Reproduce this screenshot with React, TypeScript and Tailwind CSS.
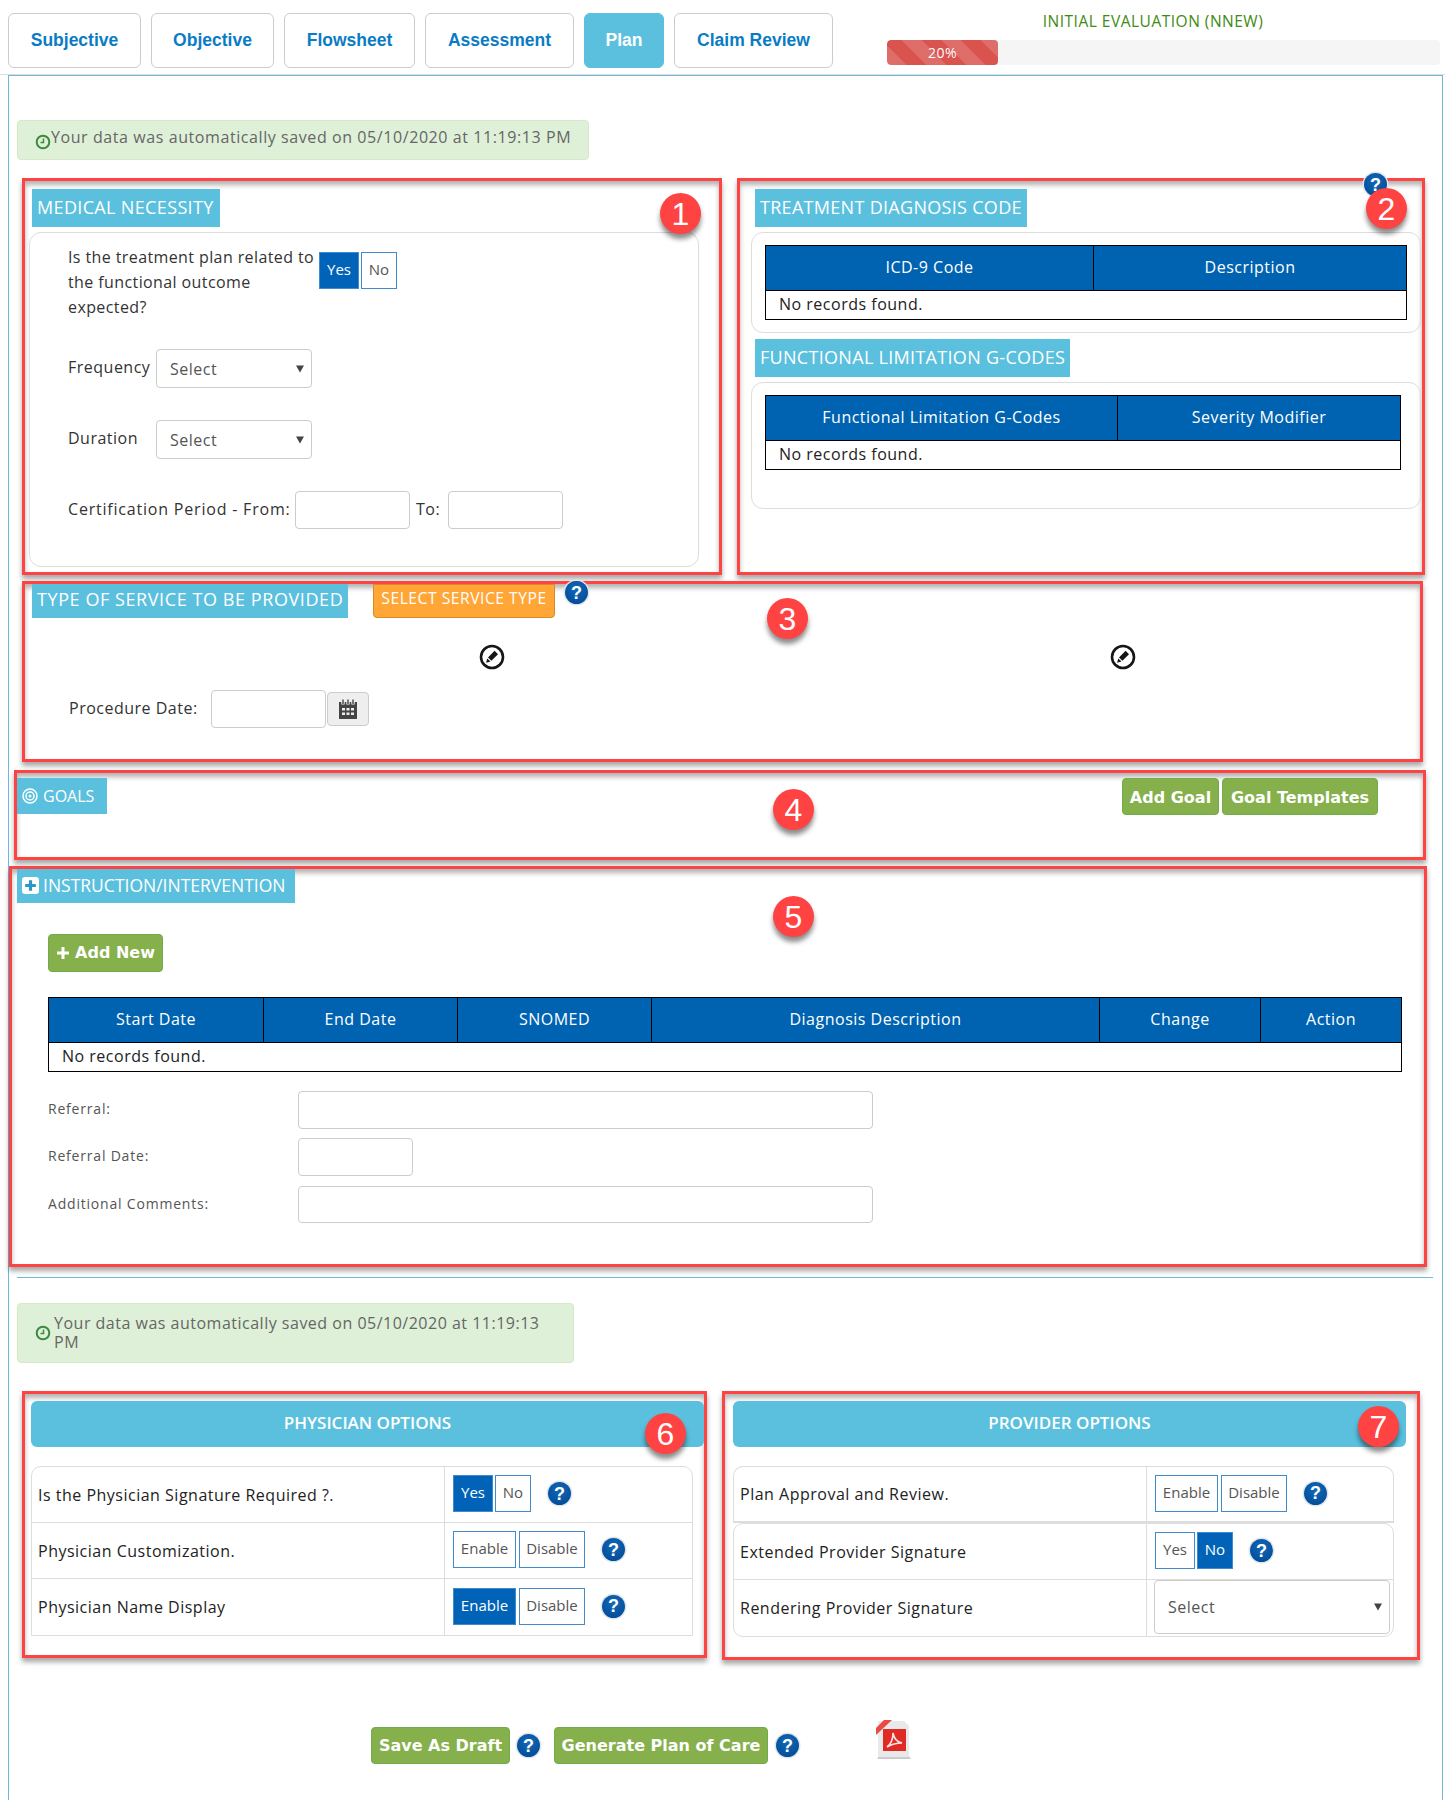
import React from "react";

const Help = ({ className = "" }: { className?: string }) => (
  <span className={`inline-flex h-[23px] w-[23px] shrink-0 items-center justify-center rounded-full bg-[radial-gradient(circle_at_50%_35%,#1268b8,#00468f)] text-[18px] leading-none font-bold tracking-normal text-white shadow-[0_0_0_1.5px_#dfe6ee] font-['Liberation_Sans'] ${className}`}>?</span>
);

const Badge = ({ n, className }: { n: number; className: string }) => (
  <span className={`absolute flex h-[41px] w-[41px] items-center justify-center rounded-full bg-[#ff4343] text-[32px] leading-none tracking-normal text-white shadow-[0_5px_5px_rgba(0,0,0,0.45)] font-['Liberation_Sans'] ${className}`}>{n}</span>
);

const Box = ({ className, children }: { className: string; children?: React.ReactNode }) => (
  <div className={`relative shrink-0 border-[3px] border-[#ff4343] shadow-[0_4px_5px_rgba(0,0,0,0.35),inset_0_4px_5px_rgba(0,0,0,0.3)] ${className}`}>{children}</div>
);

const Heading = ({ className = "", children }: { className?: string; children: React.ReactNode }) => (
  <div className={`flex items-center bg-[#5bc0de] px-[5px] whitespace-nowrap text-white ${className}`}>{children}</div>
);

const Toggle = ({ label, on, w }: { label: string; on?: boolean; w: string }) => (
  <span className={`flex h-[37px] items-center justify-center border border-[#428bca] pb-[2px] text-[15px] tracking-normal ${w} ${on ? "bg-[#0063b8] text-white" : "bg-white text-[#555]"}`}>{label}</span>
);

const SelectBox = ({ className }: { className: string }) => (
  <div className={`relative ${className}`}>
    <select className="h-full w-full appearance-none rounded-[4px] border border-[#ccc] bg-white pl-[13px] text-[16px] text-[#555] outline-none">
      <option>Select</option>
    </select>
    <span className="absolute top-1/2 right-[8px] h-0 w-0 -translate-y-1/2 border-x-[4px] border-t-[7px] border-x-transparent border-t-[#444]" />
  </div>
);

const TextInput = ({ className }: { className: string }) => (
  <input className={`rounded-[4px] border border-[#ccc] bg-white outline-none ${className}`} />
);

const Clock = () => (
  <svg width="16" height="16" viewBox="0 0 16 16" className="shrink-0">
    <circle cx="8" cy="8" r="6.3" fill="none" stroke="#3c8a3e" strokeWidth="2" />
    <path d="M8.5 4.5V8.6H5.5" fill="none" stroke="#3c8a3e" strokeWidth="1.5" />
  </svg>
);

const EditIcon = () => (
  <svg width="26" height="26" viewBox="0 0 26 26">
    <circle cx="13" cy="13" r="11" fill="#fff" stroke="#161616" strokeWidth="2.6" />
    <path d="M15.6 6.8l3.4 3.4-6.6 6.6-3.4-3.4zM8.3 14.4l3.2 3.2-4.4 1.2z" fill="#161616" />
  </svg>
);

const CalendarIcon = () => (
  <svg width="20" height="20" viewBox="0 0 20 20">
    <path d="M1 3h18v17H1z" fill="#444" />
    <path d="M5 0.5v5M10 0.5v5M15 0.5v5" stroke="#f0f0f0" strokeWidth="3.4" />
    <path d="M5 0.5v4.5M10 0.5v4.5M15 0.5v4.5" stroke="#444" strokeWidth="1.4" />
    <path d="M4 9h3v2.5H4zM8.5 9h3v2.5h-3zM13 9h3v2.5h-3zM4 13.5h3V16H4zM8.5 13.5h3V16h-3zM13 13.5h3V16h-3z" fill="#eee" />
  </svg>
);

const PdfIcon = () => (
  <svg width="36" height="40" viewBox="0 0 36 40">
    <path d="M2 39h34l-2-3H4z" fill="#ccc" />
    <path d="M3 1h26l5 5v31H3z" fill="#e9e9ec" />
    <path d="M8 9h23v22H8z" fill="#df2a26" />
    <path d="M12 27c4-3 6-9 6-14 1 6 4 9 9 10-5 0-10 1-15 4z" fill="none" stroke="#fbe3e0" strokeWidth="1.6" />
    <path d="M1 8L9 0h8L1 15z" fill="#ea4a42" />
  </svg>
);

const GreenButton = ({ className, children }: { className: string; children: React.ReactNode }) => (
  <span className={`flex items-center justify-center rounded-[4px] border border-[#6fad4b] bg-[#85b04b] text-[16px] font-bold tracking-normal text-white font-['DejaVu_Sans'] ${className}`}>{children}</span>
);

const TH = "border border-black bg-[#0063b1] pb-[2px] font-normal text-white text-[16px]";

const HeaderTable = ({ cols, className }: { cols: [string, string][]; className: string }) => (
  <table className={`table-fixed border-collapse text-[16px] ${className}`}>
    <thead>
      <tr className="h-[45px]">
        {cols.map(([c, w]) => (
          <th key={c} className={`${TH} ${w}`}>{c}</th>
        ))}
      </tr>
    </thead>
    <tbody>
      <tr className="h-[29px]">
        <td colSpan={cols.length} className="border border-black pb-[2px] pl-[13px] text-[#222]">No records found.</td>
      </tr>
    </tbody>
  </table>
);

const Row = ({ label, children, last, h }: { label: string; children: React.ReactNode; last?: boolean; h: string }) => (
  <div className={`flex ${h} ${last ? "" : "border-b border-[#ddd]"}`}>
    <div className="flex w-[413px] shrink-0 items-center border-r border-[#ddd] pl-[6px] text-[16px] text-[#222]">{label}</div>
    <div className="flex flex-1 items-center pb-[2px] pl-[8px]">{children}</div>
  </div>
);

export default function App() {
  const tabs = [
    ["Subjective", "w-[133px]"],
    ["Objective", "w-[123px]"],
    ["Flowsheet", "w-[131px]"],
    ["Assessment", "w-[149px]"],
    ["Plan", "w-[80px]"],
    ["Claim Review", "w-[159px]"],
  ];
  return (
    <div className="h-[1800px] w-[1445px] overflow-hidden bg-white font-['Open_Sans',sans-serif] tracking-[0.5px] text-[#333]">
      <div className="flex h-[75px] border-b border-[#ddd] pt-[13px] pl-[8px]">
        <div className="flex h-[55px] gap-[10px]">
          {tabs.map(([t, w]) => (
            <span key={t} className={`flex items-center justify-center rounded-[6px] border font-['Liberation_Sans'] text-[17.5px] font-bold tracking-normal ${w} ${t === "Plan" ? "border-[#5bc0de] bg-[#5bc0de] text-white" : "border-[#ccc] bg-white text-[#0a7cc4]"}`}>{t}</span>
          ))}
        </div>
        <div className="ml-[54px] flex w-[553px] flex-col">
          <div className="-mt-[4px] h-[31px] pr-[21px] text-center text-[15.5px] leading-[24px] text-[#3f8a12]">INITIAL EVALUATION (NNEW)</div>
          <div className="h-[25px] overflow-hidden rounded-[4px] bg-[#f5f5f5]">
            <div className="flex h-full w-[111px] items-center justify-center rounded-[4px] bg-[#d9534f] bg-[repeating-linear-gradient(45deg,rgba(255,255,255,0.15)_0_14px,transparent_14px_28px)] text-[14px] text-white">20%</div>
          </div>
        </div>
      </div>

      <div className="ml-[8px] h-[1725px] w-[1435px] border-x border-t border-[#6db9dc]">
        <div className="mt-[44px] ml-[8px] flex h-[40px] w-[572px] items-center rounded-[4px] border border-[#d6e9c6] bg-[#dff0d8] pl-[17px] text-[16px] tracking-[0.58px] whitespace-nowrap text-[#666]">
          <span className="mt-[4px]"><Clock /></span>
          <span className="-translate-y-[3px]">Your data was automatically saved on 05/10/2020 at 11:19:13 PM</span>
        </div>

        <div className="mt-[18px] flex">
          <Box className="ml-[13px] h-[397px] w-[700px] pt-[8px] pl-[7px]">
            <Heading className="h-[38px] w-[188px] pb-[2px] text-[18px] tracking-[0.35px]">MEDICAL NECESSITY</Heading>
            <div className="mt-[5px] -ml-[3px] h-[335px] w-[670px] rounded-[12px] border border-[#ddd] pt-[12px] pl-[38px] text-[16px] text-[#333]">
              <div className="flex">
                <div className="w-[250px] leading-[25px] tracking-[0.4px]">Is the treatment plan related to the functional outcome expected?</div>
                <div className="mt-[7px] ml-[1px] flex gap-[2px]">
                  <Toggle label="Yes" on w="w-[40px]" />
                  <Toggle label="No" w="w-[36px]" />
                </div>
              </div>
              <div className="mt-[29px] flex h-[39px] items-center">
                <span className="w-[88px] -translate-y-[2px]">Frequency</span>
                <SelectBox className="h-[39px] w-[156px]" />
              </div>
              <div className="mt-[32px] flex h-[39px] items-center">
                <span className="w-[88px] -translate-y-[2px]">Duration</span>
                <SelectBox className="h-[39px] w-[156px]" />
              </div>
              <div className="mt-[32px] flex h-[38px] items-center">
                <span className="w-[227px] -translate-y-[1px] tracking-[0.8px] whitespace-nowrap">Certification Period - From:</span>
                <TextInput className="h-[38px] w-[115px]" />
                <span className="ml-[6px] w-[32px] -translate-y-[1px]">To:</span>
                <TextInput className="h-[38px] w-[115px]" />
              </div>
            </div>
            <Badge n={1} className="top-[12px] left-[635px]" />
          </Box>

          <Box className="ml-[15px] h-[397px] w-[688px] pt-[8px] pl-[15px]">
            <Help className="absolute -top-[8px] left-[624px]" />
            <Heading className="h-[38px] w-[272px] pb-[2px] text-[18px] tracking-[0.3px]">TREATMENT DIAGNOSIS CODE</Heading>
            <div className="mt-[5px] -ml-[4px] h-[101px] w-[670px] rounded-[12px] border border-[#ddd] pt-[12px] pl-[13px]">
              <HeaderTable className="w-[642px]" cols={[["ICD-9 Code", "w-[328px]"], ["Description", ""]]} />
            </div>
            <Heading className="mt-[6px] h-[38px] w-[315px] pb-[2px] text-[18px] tracking-[0.3px]">FUNCTIONAL LIMITATION G-CODES</Heading>
            <div className="mt-[5px] -ml-[4px] h-[127px] w-[670px] rounded-[12px] border border-[#ddd] pt-[12px] pl-[13px]">
              <HeaderTable className="w-[636px]" cols={[["Functional Limitation G-Codes", "w-[352px]"], ["Severity Modifier", ""]]} />
            </div>
            <Badge n={2} className="top-[7px] left-[626px]" />
          </Box>
        </div>

        <Box className="mt-[6px] ml-[13px] h-[181px] w-[1401px] pl-[7px]">
          <div className="flex items-start">
            <Heading className="h-[34px] w-[316px] pb-[4px] text-[18px] tracking-[0.58px]">TYPE OF SERVICE TO BE PROVIDED</Heading>
            <span className="ml-[25px] flex h-[34px] w-[182px] items-center justify-center rounded-b-[4px] border border-[#d98b20] bg-[#ffa636] pb-[5px] text-[15.7px] whitespace-nowrap text-white">SELECT SERVICE TYPE</span>
            <Help className="mt-[-3px] ml-[10px]" />
          </div>
          <div className="mt-[26px] ml-[447px] flex h-[26px] w-[657px] justify-between">
            <EditIcon />
            <EditIcon />
          </div>
          <div className="mt-[20px] ml-[37px] flex items-center">
            <span className="w-[142px] -translate-y-[1px] text-[16px]">Procedure Date:</span>
            <TextInput className="h-[38px] w-[115px]" />
            <span className="ml-[1px] flex h-[34px] w-[42px] items-center justify-center rounded-[4px] border border-[#ccc] bg-[#eee]"><CalendarIcon /></span>
          </div>
          <Badge n={3} className="top-[14px] left-[742px]" />
        </Box>

        <Box className="mt-[8px] ml-[5px] h-[90px] w-[1412px]">
          <div className="flex items-start pt-[5px]">
            <Heading className="h-[36px] w-[90px] gap-[5px] text-[16px] tracking-normal">
              <svg width="16" height="16" viewBox="0 0 16 16" className="shrink-0"><circle cx="8" cy="8" r="7" fill="none" stroke="#fff" strokeWidth="1.5" /><circle cx="8" cy="8" r="4" fill="none" stroke="#fff" strokeWidth="1.5" /><circle cx="8" cy="8" r="1.5" fill="#fff" /></svg>
              GOALS
            </Heading>
            <GreenButton className="ml-[1015px] h-[37px] w-[97px] pt-[2px]">Add Goal</GreenButton>
            <GreenButton className="ml-[3px] h-[37px] w-[156px] pt-[2px]">Goal Templates</GreenButton>
          </div>
          <Badge n={4} className="top-[16px] left-[756px]" />
        </Box>

        <Box className="mt-[6px] h-[401px] w-[1418px] pl-[5px]">
          <Heading className="h-[34px] w-[278px] gap-[4px] pb-[2px] text-[17.5px] tracking-normal">
            <svg width="17" height="17" viewBox="0 0 16 16" className="shrink-0"><rect width="16" height="16" rx="3" fill="#fff" /><path d="M8 3v10M3 8h10" stroke="#2f95c4" strokeWidth="3" /></svg>
            INSTRUCTION/INTERVENTION
          </Heading>
          <div className="pl-[31px]">
            <GreenButton className="mt-[31px] h-[38px] w-[115px] gap-[5px]">
              <svg width="14" height="14" viewBox="0 0 14 14" className="shrink-0"><path d="M7 1v12M1 7h12" stroke="#fff" strokeWidth="3" /></svg>
              Add New
            </GreenButton>
            <table className="mt-[25px] w-[1354px] table-fixed border-collapse text-[16px]">
              <thead>
                <tr className="h-[45px]">
                  {[["Start Date", "w-[215px]"], ["End Date", "w-[194px]"], ["SNOMED", "w-[194px]"], ["Diagnosis Description", "w-[448px]"], ["Change", "w-[161px]"], ["Action", ""]].map(([c, w]) => (
                    <th key={c} className={`${TH} ${w}`}>{c}</th>
                  ))}
                </tr>
              </thead>
              <tbody>
                <tr className="h-[29px]">
                  <td colSpan={6} className="border border-black pb-[2px] pl-[13px] text-[#222]">No records found.</td>
                </tr>
              </tbody>
            </table>
            <div className="mt-[19px] flex h-[38px] items-center text-[14px] tracking-[0.8px] text-[#555]">
              <span className="w-[250px] -translate-y-[2px]">Referral:</span>
              <TextInput className="h-[38px] w-[575px]" />
            </div>
            <div className="mt-[9px] flex h-[38px] items-center text-[14px] tracking-[0.8px] text-[#555]">
              <span className="w-[250px] -translate-y-[2px]">Referral Date:</span>
              <TextInput className="h-[38px] w-[115px]" />
            </div>
            <div className="mt-[10px] flex h-[37px] items-center text-[14px] tracking-[0.8px] text-[#555]">
              <span className="w-[250px] -translate-y-[1px]">Additional Comments:</span>
              <TextInput className="h-[37px] w-[575px]" />
            </div>
          </div>
          <Badge n={5} className="top-[27px] left-[761px]" />
        </Box>

        <div className="mt-[10px] ml-[8px] h-px w-[1416px] bg-[#6db9dc]" />

        <div className="mt-[25px] ml-[8px] flex h-[60px] w-[557px] items-center rounded-[4px] border border-[#d6e9c6] bg-[#dff0d8] pr-[20px] pl-[17px] text-[16px] leading-[19px] text-[#666]">
          <Clock />
          <span className="ml-[3px] w-[500px]">Your data was automatically saved on 05/10/2020 at 11:19:13 PM</span>
        </div>

        <div className="mt-[28px] flex items-start">
          <Box className="ml-[13px] h-[267px] w-[685px] pt-[7px] pl-[6px]">
            <div className="flex h-[46px] w-[673px] items-center justify-center rounded-[6px] bg-[#5bc0de] pb-[2px] text-[17px] font-semibold tracking-normal text-white">PHYSICIAN OPTIONS</div>
            <div className="mt-[19px] w-[662px] overflow-hidden rounded-t-[10px] border border-[#ddd]">
              <Row label="Is the Physician Signature Required ?." h="h-[56px]">
                <Toggle label="Yes" on w="w-[40px]" />
                <span className="ml-[2px]" /><Toggle label="No" w="w-[36px]" />
                <Help className="ml-[17px]" />
              </Row>
              <Row label="Physician Customization." h="h-[56px]">
                <Toggle label="Enable" w="w-[63px]" />
                <span className="ml-[3px]" /><Toggle label="Disable" w="w-[66px]" />
                <Help className="ml-[17px]" />
              </Row>
              <Row label="Physician Name Display" h="h-[56px]" last>
                <Toggle label="Enable" on w="w-[63px]" />
                <span className="ml-[3px]" /><Toggle label="Disable" w="w-[66px]" />
                <Help className="ml-[17px]" />
              </Row>
            </div>
            <Badge n={6} className="top-[19px] left-[620px]" />
          </Box>

          <Box className="ml-[15px] h-[269px] w-[698px] pt-[7px] pl-[8px]">
            <div className="flex h-[46px] w-[673px] items-center justify-center rounded-[6px] bg-[#5bc0de] pb-[2px] text-[17px] font-semibold tracking-normal text-white">PROVIDER OPTIONS</div>
            <div className="mt-[19px] w-[661px] overflow-hidden rounded-t-[10px] border border-[#ddd] border-b-2">
              <Row label="Plan Approval and Review." h="h-[54px]" last>
                <Toggle label="Enable" w="w-[63px]" />
                <span className="ml-[3px]" /><Toggle label="Disable" w="w-[66px]" />
                <Help className="ml-[17px]" />
              </Row>
            </div>
            <div className="w-[661px] overflow-hidden rounded-[10px] border border-[#ddd]">
              <Row label="Extended Provider Signature" h="h-[56px]">
                <Toggle label="Yes" w="w-[40px]" />
                <span className="ml-[2px]" /><Toggle label="No" on w="w-[36px]" />
                <Help className="ml-[17px]" />
              </Row>
              <Row label="Rendering Provider Signature" h="h-[56px]" last>
                <SelectBox className="-ml-[1px] h-[54px] w-[236px]" />
              </Row>
            </div>
            <Badge n={7} className="top-[12px] left-[633px]" />
          </Box>
        </div>

        <div className="mt-[67px] ml-[362px] flex items-center">
          <GreenButton className="h-[37px] w-[139px]">Save As Draft</GreenButton>
          <Help className="ml-[7px]" />
          <GreenButton className="ml-[14px] h-[37px] w-[214px]">Generate Plan of Care</GreenButton>
          <Help className="ml-[8px]" />
          <span className="ml-[76px] -mt-[11px]"><PdfIcon /></span>
        </div>
      </div>
    </div>
  );
}
